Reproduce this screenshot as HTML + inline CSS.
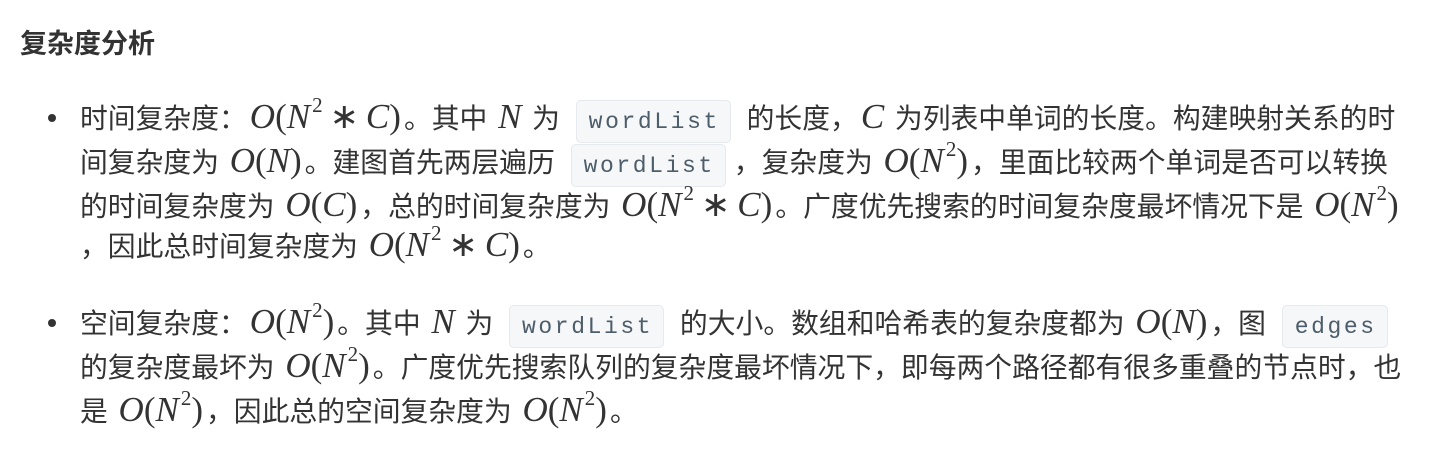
<!DOCTYPE html>
<html><head><meta charset="utf-8"><style>
body{margin:0;width:1446px;height:454px;background:#fff;position:relative;overflow:hidden;font-family:"Liberation Sans","Noto Sans CJK SC",sans-serif;color:#333;}
.h{position:absolute;left:20px;top:26px;font-size:27px;font-weight:bold;line-height:36px;color:#333}
.l{position:absolute;left:80px;font-size:27.8px;line-height:44px;white-space:nowrap;}
.b{position:absolute;left:48px;width:8px;height:8px;border-radius:50%;background:#333}
.m{font-family:"Liberation Serif",serif;font-size:35px;margin:0 3px}
.i{font-style:italic}
.s{margin:0 7px}
sup{font-size:21px;vertical-align:16px;line-height:0;margin-left:2px}
code{font-family:"Liberation Mono",monospace;font-size:23px;letter-spacing:2.6px;color:#4d5d69;background:#f5f7f9;border:1px solid #e6e9ed;border-radius:5px;padding:8px 10px 7px 12px;margin:0 8px;}
</style></head><body>
<div class="h">复杂度分析</div>
<div class="b" style="top:114px"></div>
<div class="l" style="top:95px">时间复杂度：<span class="m"><span class="i">O</span>(<span class="i">N</span><sup>2</sup><span class="s">∗</span><span class="i">C</span>)</span>。其中 <span class="m i">N</span> 为 <code>wordList</code> 的长度，<span class="m i">C</span> 为列表中单词的长度。构建映射关系的时</div>
<div class="l" style="top:139px">间复杂度为 <span class="m"><span class="i">O</span>(<span class="i">N</span>)</span>。建图首先两层遍历 <code>wordList</code>，复杂度为 <span class="m"><span class="i">O</span>(<span class="i">N</span><sup>2</sup>)</span>，里面比较两个单词是否可以转换</div>
<div class="l" style="top:183px">的时间复杂度为 <span class="m"><span class="i">O</span>(<span class="i">C</span>)</span>，总的时间复杂度为 <span class="m"><span class="i">O</span>(<span class="i">N</span><sup>2</sup><span class="s">∗</span><span class="i">C</span>)</span>。广度优先搜索的时间复杂度最坏情况下是 <span class="m"><span class="i">O</span>(<span class="i">N</span><sup>2</sup>)</span></div>
<div class="l" style="top:223px">，因此总时间复杂度为 <span class="m"><span class="i">O</span>(<span class="i">N</span><sup>2</sup><span class="s">∗</span><span class="i">C</span>)</span>。</div>
<div class="b" style="top:319px"></div>
<div class="l" style="top:300px">空间复杂度：<span class="m"><span class="i">O</span>(<span class="i">N</span><sup>2</sup>)</span>。其中 <span class="m i">N</span> 为 <code>wordList</code> 的大小。数组和哈希表的复杂度都为 <span class="m"><span class="i">O</span>(<span class="i">N</span>)</span>，图 <code>edges</code></div>
<div class="l" style="top:344px">的复杂度最坏为 <span class="m"><span class="i">O</span>(<span class="i">N</span><sup>2</sup>)</span>。广度优先搜索队列的复杂度最坏情况下，即每两个路径都有很多重叠的节点时，也</div>
<div class="l" style="top:388px">是 <span class="m"><span class="i">O</span>(<span class="i">N</span><sup>2</sup>)</span>，因此总的空间复杂度为 <span class="m"><span class="i">O</span>(<span class="i">N</span><sup>2</sup>)</span>。</div>
</body></html>
